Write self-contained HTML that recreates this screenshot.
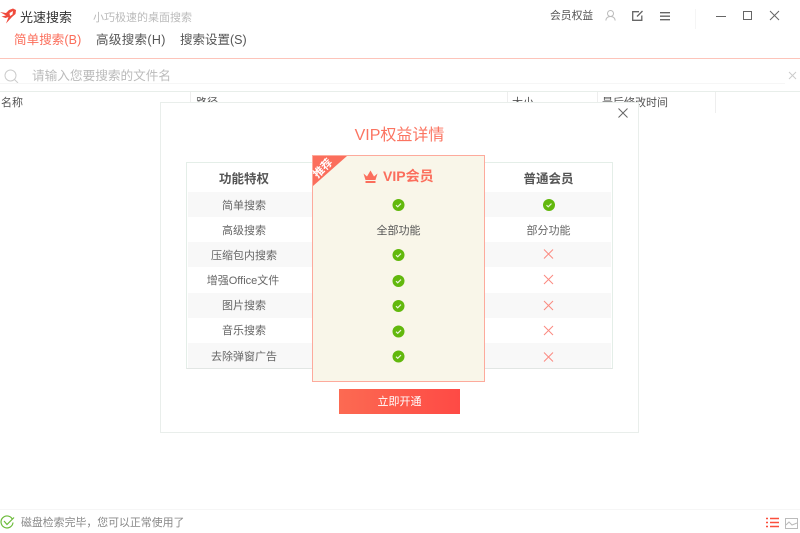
<!DOCTYPE html>
<html lang="zh">
<head>
<meta charset="utf-8">
<style>
html,body{margin:0;padding:0;width:800px;height:533px;overflow:hidden;background:#fff;font-family:"Liberation Sans","Noto Sans CJK SC",sans-serif;color:#555}
.a{position:absolute;white-space:nowrap}
.c{text-align:center}
svg{position:absolute;overflow:visible}
.row{position:absolute;left:188px;width:423px;height:25px}
.g{background:#f8f8f8}
.lbl{position:absolute;left:186px;width:114px;text-align:center;font-size:11px;line-height:14px;color:#666}
</style>
</head>
<body>
<!-- title bar -->
<svg style="left:0;top:8px" width="18" height="16" viewBox="0 0 18 16"><path d="M0 4 L6 5 L9 2 L13 0.500 L16 2 L15.500 6 L12 9 L6 15.500 L8.500 9 L5.500 10 L1.500 8.500 L6 7.500 Z" fill="#ef4a3c"/><path d="M9.500 5 L13 3 L12.500 6.500 L10 8 Z" fill="#fff"/></svg>
<div class="a" style="left:20px;top:9px;font-size:13px;line-height:17px;color:#333">光速搜索</div>
<div class="a" style="left:93px;top:10px;font-size:11px;line-height:16px;color:#bbb">小巧极速的桌面搜索</div>
<div class="a" style="left:14px;top:32px;font-size:12.500px;letter-spacing:0.100px;line-height:17px;color:#fb6d5a">简单搜索(B)</div>
<div class="a" style="left:96px;top:32px;font-size:12.500px;letter-spacing:0.350px;line-height:17px;color:#555">高级搜索(H)</div>
<div class="a" style="left:180px;top:32px;font-size:12.500px;line-height:17px;color:#555">搜索设置(S)</div>
<div class="a" style="left:550px;top:9px;font-size:10.800px;line-height:15px;color:#555">会员权益</div>
<svg style="left:605px;top:10px" width="11" height="11" viewBox="0 0 11 11" fill="none" stroke="#bbb" stroke-width="1"><circle cx="5.500" cy="3.500" r="3"/><path d="M0.800 10.500C1.200 7.500 3 6.500 5.500 6.500S9.800 7.500 10.200 10.500"/></svg>
<svg style="left:632px;top:11px" width="11" height="10" viewBox="0 0 11 10" fill="none" stroke="#666" stroke-width="1.300"><path d="M7 0.700H0.700V9.300H9.800V4.500"/><path d="M5 5.500L10.500 0"/></svg>
<svg style="left:660px;top:12px" width="10" height="9" viewBox="0 0 10 9" fill="none" stroke="#666" stroke-width="1.300"><path d="M0 0.700H10M0 4.200H10M0 7.700H10"/></svg>
<div class="a" style="left:695px;top:9px;width:1px;height:20px;background:#f5f5f5"></div>
<svg style="left:716px;top:10px" width="70" height="12" viewBox="0 0 70 12" fill="none" stroke="#666" stroke-width="1"><path d="M0 6.500H10"/><rect x="27.500" y="1.500" width="8" height="8"/><path d="M54 1L63 10M63 1L54 10"/></svg>
<div class="a" style="left:0;top:58px;width:800px;height:1px;background:#fdc4ba"></div>
<!-- search -->
<svg style="left:4px;top:69px" width="15" height="15" viewBox="0 0 15 15" fill="none" stroke="#ccc" stroke-width="1"><circle cx="6.500" cy="6.500" r="5.500"/><path d="M10.500 10.500L14 14"/></svg>
<div class="a" style="left:32px;top:68px;font-size:12.650px;line-height:17px;color:#bbb">请输入您要搜索的文件名</div>
<svg style="left:788px;top:71px" width="9" height="9" viewBox="0 0 9 9" fill="none" stroke="#ccc" stroke-width="1"><path d="M1 1L8 8M8 1L1 8"/></svg>
<div class="a" style="left:0;top:83px;width:785px;height:1px;background:#f6f6f6"></div>
<div class="a" style="left:0;top:91px;width:800px;height:1px;background:#e8eeea"></div>
<!-- table header -->
<div class="a" style="left:1px;top:96px;font-size:11px;line-height:15px;color:#555">名称</div>
<div class="a" style="left:196px;top:96px;font-size:11px;line-height:15px;color:#555">路径</div>
<div class="a" style="left:512px;top:96px;font-size:11px;line-height:15px;color:#555">大小</div>
<div class="a" style="left:602px;top:96px;font-size:11px;line-height:15px;color:#555">最后修改时间</div>
<div class="a" style="left:190px;top:92px;width:1px;height:21px;background:#eee"></div>
<div class="a" style="left:507px;top:92px;width:1px;height:21px;background:#eee"></div>
<div class="a" style="left:597px;top:92px;width:1px;height:21px;background:#eee"></div>
<div class="a" style="left:715px;top:92px;width:1px;height:21px;background:#eee"></div>
<!-- dialog -->
<div class="a" style="left:160px;top:102px;width:477px;height:329px;background:#fff;border:1px solid #e9eeeb"></div>
<svg style="left:618px;top:108px" width="10" height="10" viewBox="0 0 10 10" fill="none" stroke="#666" stroke-width="1"><path d="M0.500 0.500L9.500 9.500M9.500 0.500L0.500 9.500"/></svg>
<div class="a c" style="left:160px;top:125px;width:479px;font-size:16px;line-height:22px;color:#fb7461">VIP权益详情</div>
<!-- table -->
<div class="a" style="left:186px;top:162px;width:425px;height:205px;border:1px solid #e4eee8;border-bottom:1px solid #e2e6e4;background:#fff"></div>
<div class="row g" style="top:192px"></div>
<div class="row g" style="top:242px"></div>
<div class="row g" style="top:293px"></div>
<div class="row g" style="top:343px"></div>
<div class="lbl" style="top:171px;font-size:12.500px;font-weight:bold;line-height:17px;color:#555;left:187px">功能特权</div>
<div class="lbl" style="top:199px;left:187px">简单搜索</div>
<div class="lbl" style="top:224px;left:187px">高级搜索</div>
<div class="lbl" style="top:249px;left:187px">压缩包内搜索</div>
<div class="lbl" style="top:274px">增强Office文件</div>
<div class="lbl" style="top:299px;left:187px">图片搜索</div>
<div class="lbl" style="top:324px;left:187px">音乐搜索</div>
<div class="lbl" style="top:350px;left:187px">去除弹窗广告</div>
<!-- normal col -->
<div class="a c" style="left:484px;top:171px;width:129px;font-size:12.500px;font-weight:bold;line-height:17px;color:#555">普通会员</div>
<div class="a c" style="left:484px;top:224px;width:129px;font-size:11px;line-height:14px;color:#666">部分功能</div>
<svg style="left:543px;top:199px" width="12" height="12" viewBox="0 0 12 12"><circle cx="6" cy="6" r="6" fill="#62b80d"/><path d="M3.500 6.200L5.200 7.800L8.500 4.600" fill="none" stroke="#e8f5d8" stroke-width="1.200"/></svg>
<svg style="left:543px;top:248px" width="11" height="160" viewBox="0 0 11 160" fill="none" stroke="#fb8a80" stroke-width="1"><path d="M1 1.500L10 10.500M10 1.500L1 10.500"/><path d="M1 27L10 36M10 27L1 36"/><path d="M1 53L10 62M10 53L1 62"/><path d="M1 78L10 87M10 78L1 87"/><path d="M1 104.500L10 113.500M10 104.500L1 113.500"/></svg>
<!-- VIP column -->
<div class="a" style="left:312px;top:155px;width:171px;height:225px;background:#f9f6e9;border:1px solid #fdaa9c"></div>
<svg style="left:313px;top:156px" width="34" height="30" viewBox="0 0 34 30"><path d="M0 0H34L0 30Z" fill="#fb6e5c"/></svg>
<div class="a" style="left:312px;top:162px;width:24px;transform:rotate(-45deg);font-size:11px;line-height:12px;color:#fff;font-weight:bold">推荐</div>
<svg style="left:363px;top:170px" width="15" height="13" viewBox="0 0 15 13"><path d="M0.500 3.500L4 6.500L7.500 0.500L11 6.500L14.500 3.500L12.500 10H2.500Z" fill="#fb6e5c"/><rect x="2.500" y="11" width="10" height="2" fill="#fb6e5c"/></svg>
<div class="a" style="left:383px;top:167px;font-size:14px;line-height:18px;color:#fb6e5c;font-weight:bold">VIP会员</div>
<div class="a c" style="left:313px;top:224px;width:171px;font-size:11px;line-height:14px;color:#555">全部功能</div>
<svg style="left:392px;top:199px" width="13" height="165" viewBox="0 0 13 165">
<g fill="#62b80d"><circle cx="6.500" cy="6" r="6"/><circle cx="6.500" cy="56" r="6"/><circle cx="6.500" cy="82" r="6"/><circle cx="6.500" cy="107" r="6"/><circle cx="6.500" cy="132.500" r="6"/><circle cx="6.500" cy="157.500" r="6"/></g>
<g fill="none" stroke="#eaf6dc" stroke-width="1.200"><path d="M4 6.200L5.700 7.800L9 4.600"/><path d="M4 56.200L5.700 57.800L9 54.600"/><path d="M4 82.200L5.700 83.800L9 80.600"/><path d="M4 107.200L5.700 108.800L9 105.600"/><path d="M4 132.700L5.700 134.300L9 131.100"/><path d="M4 157.700L5.700 159.300L9 156.100"/></g>
</svg>
<!-- button -->
<div class="a c" style="left:339px;top:389px;width:121px;height:25px;line-height:26px;font-size:11px;color:#fff;background:linear-gradient(90deg,#fc6a52,#fe4a45)">立即开通</div>
<!-- status -->
<div class="a" style="left:0;top:509px;width:800px;height:1px;background:#f6f6f6"></div>
<svg style="left:0;top:515px" width="15" height="14" viewBox="0 0 15 14" fill="none" stroke="#6cbb3a" stroke-width="1.200"><path d="M12.500 4.500A6 6 0 1 0 13 7.500"/><path d="M4 6L7 9.500L14 2.500"/></svg>
<div class="a" style="left:21px;top:516px;font-size:10.900px;line-height:15px;color:#888">磁盘检索完毕，您可以正常使用了</div>
<svg style="left:766px;top:517px" width="13" height="11" viewBox="0 0 13 11" fill="none" stroke="#fb4f3c" stroke-width="1.600"><path d="M0 1.500H2M4 1.500H13M0 5.500H2M4 5.500H13M0 9.500H2M4 9.500H13"/></svg>
<svg style="left:785px;top:518px" width="13" height="11" viewBox="0 0 13 11" fill="none" stroke="#bbb" stroke-width="1"><rect x="0.500" y="0.500" width="12" height="10"/><path d="M1 7L4 4L7 7L12 5"/></svg>
</body>
</html>
